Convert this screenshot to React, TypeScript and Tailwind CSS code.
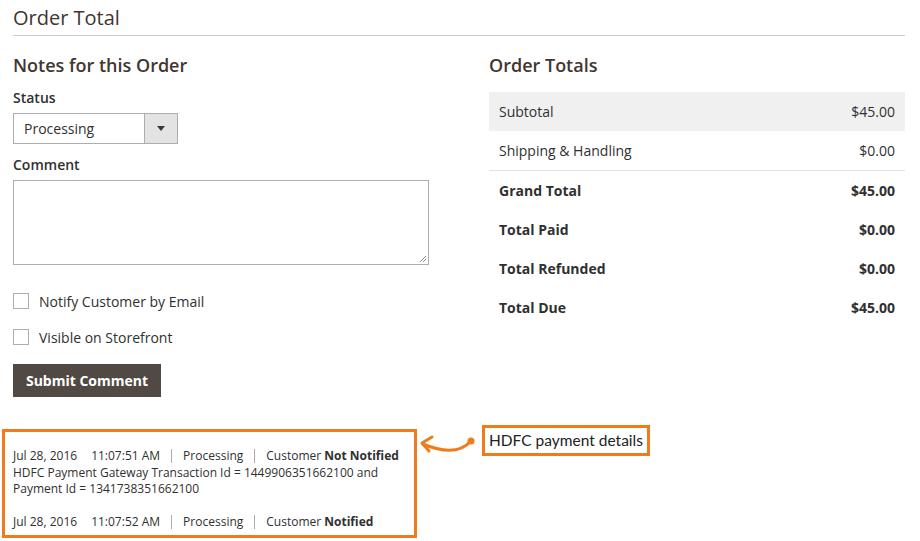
import React from "react";

const OR = "#f07b1d";

function Sep() {
  return <span className="inline-block w-px h-[14px] bg-[#adadad] mx-[11px] align-[-3px]" />;
}

export default function App() {
  const rows: [string, string, boolean][] = [
    ["Grand Total", "$45.00", true],
    ["Total Paid", "$0.00", true],
    ["Total Refunded", "$0.00", true],
    ["Total Due", "$45.00", true],
  ];
  return (
    <div className="w-[920px] h-[541px] bg-white overflow-hidden text-[#303030]" style={{ fontFamily: '"Open Sans", sans-serif' }}>
      <div className="px-[13px] w-[918px]">
        <div className="pt-[4px] pb-[3px] border-b border-[#cccccc]">
          <h1 className="text-[20px] leading-[28px] text-[#41362f]">Order Total</h1>
        </div>
        <div className="grid grid-cols-[415px_416px] gap-x-[61px] pt-[17px]">
          {/* Left */}
          <div className="flex flex-col">
            <h2 className="text-[18px] leading-[24px] font-semibold text-[#41362f]">Notes for this Order</h2>
            <div className="mt-[11px] text-[14px] leading-[20px] font-semibold text-[#303030]">Status</div>
            <div className="mt-[5px] flex w-[165px] h-[31px] border border-[#adadad]">
              <div className="flex-1 flex items-center pl-[10px] text-[14px] text-[#303030]">Processing</div>
              <div className="w-[33px] border-l border-[#adadad] bg-[#e3e3e3] flex items-center justify-center">
                <svg width="8" height="5" viewBox="0 0 8 5"><path d="M0 0 H8 L4 5 Z" fill="#41362f" /></svg>
              </div>
            </div>
            <div className="mt-[11px] text-[14px] leading-[20px] font-semibold text-[#303030]">Comment</div>
            <div className="mt-[5px] w-[416px] h-[85px] border border-[#adadad] relative">
              <svg className="absolute right-[1px] bottom-[1px]" width="8" height="8" viewBox="0 0 8 8">
                <path d="M7 1 L1 7 M7 4 L4 7" stroke="#888" strokeWidth="1" />
              </svg>
            </div>
            <label className="mt-[26px] flex items-center h-[20px] text-[14px]">
              <span className="w-[16px] h-[16px] border border-[#adadad] bg-white mr-[10px]" />
              Notify Customer by Email
            </label>
            <label className="mt-[16px] flex items-center h-[20px] text-[14px]">
              <span className="w-[16px] h-[16px] border border-[#adadad] bg-white mr-[10px]" />
              Visible on Storefront
            </label>
            <div className="mt-[17px]">
              <button className="h-[33px] w-[148px] bg-[#514943] text-white text-[14px] font-bold">Submit Comment</button>
            </div>
          </div>
          {/* Right */}
          <div className="flex flex-col">
            <h2 className="text-[18px] leading-[24px] font-semibold text-[#41362f]">Order Totals</h2>
            <div className="mt-[15px] text-[14px]">
              <div className="h-[39px] bg-[#f0f0f0] flex items-center justify-between px-[10px]">
                <span>Subtotal</span><span>$45.00</span>
              </div>
              <div className="h-[40px] border-b border-[#e3e3e3] flex items-center justify-between px-[10px]">
                <span>Shipping &amp; Handling</span><span>$0.00</span>
              </div>
              {rows.map(([a, b]) => (
                <div key={a} className="h-[39px] flex items-center justify-between px-[10px] font-bold">
                  <span>{a}</span><span>{b}</span>
                </div>
              ))}
            </div>
          </div>
        </div>
      </div>
      <div className="mt-[30px] pl-[2px] flex items-start">
        <div className="mt-[2px] w-[415px] h-[109px] border-[3px] border-[#f07b1d] pl-[8px] pt-[16px] text-[12px] leading-[16.5px] text-[#303030]">
          <div>
            <span>Jul 28, 2016</span><span className="ml-[14px]">11:07:51 AM</span><Sep /><span>Processing</span><Sep />
            <span>Customer <b>Not Notified</b></span>
          </div>
          <div>HDFC Payment Gateway Transaction Id = 1449906351662100 and</div>
          <div>Payment Id = 1341738351662100</div>
          <div className="mt-[16.5px]">
            <span>Jul 28, 2016</span><span className="ml-[14px]">11:07:52 AM</span><Sep /><span>Processing</span><Sep />
            <span>Customer <b>Notified</b></span>
          </div>
        </div>
        <svg width="65" height="32" viewBox="0 0 65 32" className="shrink-0">
          <circle cx="54" cy="14" r="3.5" fill={OR} />
          <path d="M54 14 C 46 23, 32 28, 6 17" stroke={OR} strokeWidth="3" fill="none" strokeLinecap="round" />
          <path d="M15 10 L5 16 L12 24" stroke={OR} strokeWidth="3" fill="none" strokeLinejoin="round" strokeLinecap="round" />
        </svg>
        <div className="-mt-[2px] h-[31px] border-[3px] border-[#f07b1d] px-[4px] flex items-center text-[15.5px] text-[#222]" style={{ fontFamily: 'Lato, sans-serif' }}>
          HDFC payment details
        </div>
      </div>
    </div>
  );
}
